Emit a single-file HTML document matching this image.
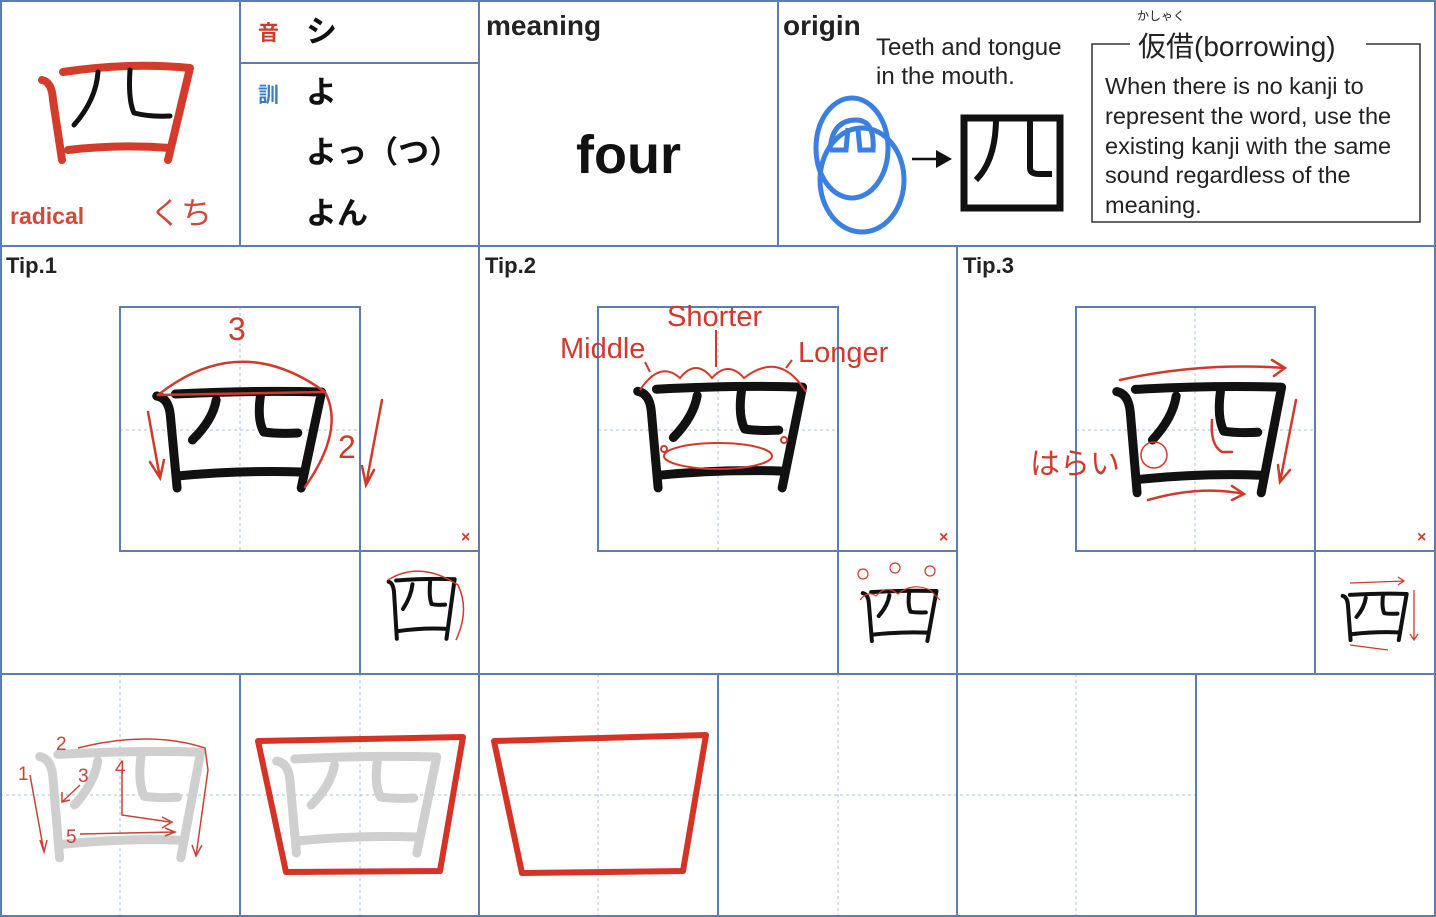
<!DOCTYPE html>
<html><head><meta charset="utf-8"><style>
html,body{margin:0;padding:0;background:#fff;}
svg{display:block;}
text{font-family:"Liberation Sans","Noto Sans CJK JP",sans-serif;}
</style></head><body>
<svg width="1436" height="917" viewBox="0 0 1436 917" xmlns="http://www.w3.org/2000/svg">
<defs>
<symbol id="k" viewBox="0 0 100 100" preserveAspectRatio="none" overflow="visible">
<g fill="none" stroke-linecap="round" stroke-linejoin="round">
<path vector-effect="non-scaling-stroke" d="M1 6 Q8 8 9 25 L13 98"/>
<path vector-effect="non-scaling-stroke" d="M12 4 Q60 0 98 2 L86 98"/>
<path vector-effect="non-scaling-stroke" d="M13 86 Q50 80 86 82"/>
<path vector-effect="non-scaling-stroke" d="M36 10 Q34 30 22 50"/>
<path vector-effect="non-scaling-stroke" d="M62 6 Q60 30 64 42 Q72 44 84 43"/>
</g>
</symbol>
</defs>
<rect width="1436" height="917" fill="#fff"/>
<g stroke="#a9c0dc" stroke-width="1" stroke-dasharray="3,3">
<line x1="120" y1="430" x2="360" y2="430"/><line x1="240" y1="307" x2="240" y2="551"/>
<line x1="598" y1="430" x2="838" y2="430"/><line x1="718" y1="307" x2="718" y2="551"/>
<line x1="1076" y1="430" x2="1315" y2="430"/><line x1="1195" y1="307" x2="1195" y2="551"/>
<line x1="0" y1="795" x2="1196" y2="795"/>
<line x1="120" y1="674" x2="120" y2="917"/><line x1="360" y1="674" x2="360" y2="917"/>
<line x1="598" y1="674" x2="598" y2="917"/><line x1="838" y1="674" x2="838" y2="917"/>
<line x1="1076" y1="674" x2="1076" y2="917"/>
</g>
<g stroke="#5b7db1" stroke-width="2" fill="none">
<rect x="1" y="1" width="1434" height="915"/>
<line x1="0" y1="246" x2="1436" y2="246"/>
<line x1="0" y1="674" x2="1436" y2="674"/>
<line x1="240" y1="0" x2="240" y2="246"/><line x1="479" y1="0" x2="479" y2="917"/><line x1="778" y1="0" x2="778" y2="246"/>
<line x1="957" y1="246" x2="957" y2="917"/>
<line x1="240" y1="63" x2="479" y2="63"/>
<line x1="240" y1="674" x2="240" y2="917"/><line x1="718" y1="674" x2="718" y2="917"/><line x1="1196" y1="674" x2="1196" y2="917"/>
<rect x="120" y="307" width="240" height="244"/><line x1="360" y1="551" x2="479" y2="551"/><line x1="360" y1="551" x2="360" y2="674"/>
<rect x="598" y="307" width="240" height="244"/><line x1="838" y1="551" x2="957" y2="551"/><line x1="838" y1="551" x2="838" y2="674"/>
<rect x="1076" y="307" width="239" height="244"/><line x1="1315" y1="551" x2="1436" y2="551"/><line x1="1315" y1="551" x2="1315" y2="674"/>
</g>
<g fill="none" stroke-linecap="round" stroke-linejoin="round">
<path d="M42 80 Q52 82 53 100 L62 160" stroke="#d43b2b" stroke-width="8"/>
<path d="M63 72 Q130 62 190 68 L168 160" stroke="#d43b2b" stroke-width="8"/>
<path d="M68 150 Q120 144 170 148" stroke="#d43b2b" stroke-width="8"/>
<path d="M98 72 Q96 100 74 125" stroke="#111" stroke-width="5"/>
<path d="M130 70 Q128 100 134 113 Q150 117 170 116" stroke="#111" stroke-width="5"/>
</g>
<text x="10" y="224" font-size="23" font-weight="bold" fill="#d04a3c">radical</text>
<text x="150" y="224" font-size="31" fill="#d04a3c">くち</text>
<text x="258" y="40" font-size="21" font-weight="bold" fill="#d03a2c">音</text>
<text x="306" y="42" font-size="31" font-weight="bold" fill="#111">シ</text>
<text x="258" y="102" font-size="21" font-weight="bold" fill="#3a7fc4">訓</text>
<text x="306" y="103" font-size="31" font-weight="bold" fill="#111">よ</text>
<text x="306" y="163" font-size="31" font-weight="bold" fill="#111">よっ（つ）</text>
<text x="306" y="224" font-size="31" font-weight="bold" fill="#111">よん</text>
<text x="486" y="35" font-size="28" font-weight="bold" fill="#222">meaning</text>
<text x="576" y="173" font-size="54" font-weight="bold" fill="#111">four</text>
<text x="783" y="35" font-size="28" font-weight="bold" fill="#222">origin</text>
<text x="876" y="55" font-size="24" fill="#222">Teeth and tongue</text>
<text x="876" y="84" font-size="24" fill="#222">in the mouth.</text>
<g fill="none" stroke="#3b7fe0" stroke-width="5">
<ellipse cx="852" cy="148" rx="36" ry="50"/>
<ellipse cx="862" cy="180" rx="42" ry="52"/>
<path d="M830 150 Q832 120 856 120 Q875 120 873 150 L860 150 L858 130 M848 128 L846 150 L830 150"/>
</g>
<line x1="912" y1="159" x2="938" y2="159" stroke="#111" stroke-width="2.5"/>
<path d="M936 150 L952 159 L936 168 Z" fill="#111"/>
<g fill="none" stroke="#111" stroke-width="7">
<rect x="964" y="118" width="96" height="90"/>
<path d="M996 118 Q996 160 976 180" stroke-width="6"/>
<path d="M1030 118 L1030 168 Q1030 174 1040 174 L1052 174" stroke-width="6"/>
</g>
<path d="M1130 44 L1092 44 L1092 222 L1420 222 L1420 44 L1366 44" fill="none" stroke="#333" stroke-width="1.5"/>
<text x="1137" y="20" font-size="12" fill="#222">かしゃく</text>
<text x="1138" y="56" font-size="28" fill="#222">仮借(borrowing)</text>
<g font-size="23.5" fill="#222">
<text x="1105" y="94">When there is no kanji to</text>
<text x="1105" y="124">represent the word, use the</text>
<text x="1105" y="154">existing kanji with the same</text>
<text x="1105" y="183">sound regardless of the</text>
<text x="1105" y="213">meaning.</text>
</g>
<text x="6" y="273" font-size="22" font-weight="bold" fill="#222">Tip.1</text>
<text x="485" y="273" font-size="22" font-weight="bold" fill="#222">Tip.2</text>
<text x="963" y="273" font-size="22" font-weight="bold" fill="#222">Tip.3</text>
<g font-size="16" font-weight="bold" fill="#d03a2c">
<text x="461" y="542">×</text><text x="939" y="542">×</text><text x="1417" y="542">×</text>
</g>
<use href="#k" x="155" y="390" width="170" height="100" stroke="#111" stroke-width="9"/>
<g fill="none" stroke="#d03a2c" stroke-width="2.5" stroke-linecap="round">
<path d="M158 395 Q240 330 325 392"/>
<path d="M158 395 L325 392"/>
<path d="M325 392 Q345 430 305 487"/>
<path d="M148 412 L160 478 M150 462 L160 478 L164 460"/>
<path d="M382 400 L366 485 M362 466 L366 485 L374 470"/>
</g>
<text x="228" y="340" font-size="32" fill="#d03a2c">3</text>
<text x="338" y="458" font-size="32" fill="#d03a2c">2</text>
<use href="#k" x="388" y="578" width="68" height="62" stroke="#111" stroke-width="4"/>
<path d="M388 580 Q420 560 458 585 Q470 610 456 640" fill="none" stroke="#d03a2c" stroke-width="1.5"/>
<use href="#k" x="636" y="385" width="170" height="105" stroke="#111" stroke-width="9"/>
<g fill="none" stroke="#d03a2c" stroke-width="2">
<ellipse cx="718" cy="456" rx="54" ry="13"/>
<path d="M640 390 Q660 360 680 378 Q696 358 712 378 Q728 360 744 378 Q780 350 806 392"/>
<path d="M716 367 L716 330 M650 372 L645 362 M786 368 L792 360"/>
<circle cx="664" cy="449" r="3"/><circle cx="784" cy="440" r="3"/>
</g>
<text x="667" y="326" font-size="29" fill="#d03a2c">Shorter</text>
<text x="560" y="358" font-size="29" fill="#d03a2c">Middle</text>
<text x="798" y="362" font-size="29" fill="#d03a2c">Longer</text>
<use href="#k" x="862" y="590" width="76" height="52" stroke="#111" stroke-width="4"/>
<g fill="none" stroke="#d03a2c" stroke-width="1.2">
<path d="M860 600 Q868 590 876 596 Q886 584 898 594 Q912 582 930 590 L940 600"/>
<circle cx="863" cy="574" r="5"/><circle cx="895" cy="568" r="5"/><circle cx="930" cy="571" r="5"/>
</g>
<use href="#k" x="1115" y="385" width="170" height="110" stroke="#111" stroke-width="9"/>
<g fill="none" stroke="#d03a2c" stroke-width="2.5" stroke-linecap="round">
<path d="M1120 380 Q1200 362 1285 368 M1272 360 L1285 368 L1274 376"/>
<path d="M1296 400 L1280 482 M1278 465 L1280 482 L1290 470"/>
<path d="M1148 500 Q1200 485 1244 494 M1232 486 L1244 494 L1232 500"/>
<path d="M1212 420 Q1210 445 1222 452 L1232 452"/>
<circle cx="1154" cy="455" r="13" stroke-width="1.5"/>
</g>
<text x="1030" y="474" font-size="30" fill="#d03a2c">はらい</text>
<use href="#k" x="1342" y="593" width="66" height="48" stroke="#111" stroke-width="4"/>
<g fill="none" stroke="#d03a2c" stroke-width="1.3">
<path d="M1350 583 L1404 581 M1398 577 L1404 581 L1398 585"/>
<path d="M1414 590 L1414 640 M1410 634 L1414 640 L1418 634"/>
<path d="M1350 645 L1388 650"/>
</g>
<use href="#k" x="38" y="750" width="166" height="110" stroke="#cfcfcf" stroke-width="9"/>
<g fill="none" stroke="#c84336" stroke-width="1.5">
<path d="M30 775 L44 852 M40 840 L44 852 L47 840"/>
<path d="M78 748 Q150 730 205 748 L208 770 L196 856 M192 845 L196 856 L202 845"/>
<path d="M80 785 L62 802 M62 792 L62 802 L70 800"/>
<path d="M122 770 L122 815 L170 822 M162 817 L172 822 L162 828"/>
<path d="M80 834 L175 832 M165 828 L175 832 L165 836"/>
</g>
<g font-size="19" fill="#c84336"><text x="56" y="750">2</text><text x="18" y="780">1</text><text x="78" y="782">3</text><text x="115" y="774">4</text><text x="66" y="843">5</text></g>
<use href="#k" x="275" y="755" width="165" height="100" stroke="#cfcfcf" stroke-width="9"/>
<path d="M258 741 L463 737 L440 871 L286 872 Z" fill="none" stroke="#d53325" stroke-width="6" stroke-linejoin="round"/>
<path d="M494 741 L706 735 L683 871 L522 873 Z" fill="none" stroke="#d53325" stroke-width="6" stroke-linejoin="round"/>
</svg>
</body></html>
